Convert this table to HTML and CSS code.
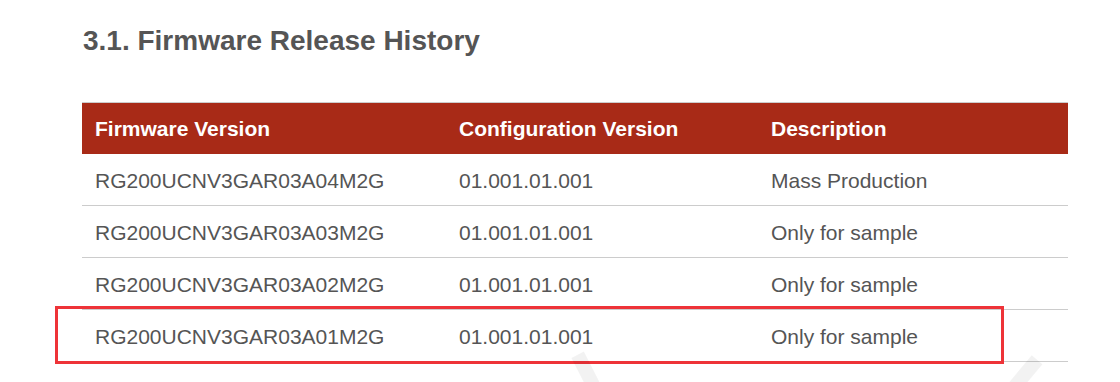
FILE: index.html
```html
<!DOCTYPE html>
<html>
  <head>
    <title>Firmware Release History</title>
    <link rel="stylesheet" href="styles.css">
  </head>
  <body>
    <div class="page">
      <h2 class="section-title">3.1. Firmware Release History</h2>
      <table class="releases">
        <tr>
          <th class="col-fw">Firmware Version</th>
          <th class="col-cfg">Configuration Version</th>
          <th>Description</th>
        </tr>
        <tr>
          <td>RG200UCNV3GAR03A04M2G</td>
          <td>01.001.01.001</td>
          <td>Mass Production</td>
        </tr>
        <tr>
          <td>RG200UCNV3GAR03A03M2G</td>
          <td>01.001.01.001</td>
          <td>Only for sample</td>
        </tr>
        <tr>
          <td>RG200UCNV3GAR03A02M2G</td>
          <td>01.001.01.001</td>
          <td>Only for sample</td>
        </tr>
        <tr>
          <td>RG200UCNV3GAR03A01M2G</td>
          <td>01.001.01.001</td>
          <td>Only for sample</td>
        </tr>
      </table>
      <div class="highlight"></div>
      <span class="mark mark-a"></span>
      <span class="mark mark-b"></span>
    </div>
  </body>
</html>
```

FILE: styles.css
```css
html, body {
  overflow: hidden;
}

body {
  margin: 0;
  height: 382px;
  background: #fff;
  font-family: "Liberation Sans", Arial, sans-serif;
}

.page {
  position: relative;
  width: 986px;
  height: 358px;
  padding-left: 82px;
  padding-top: 24px;
  overflow: hidden;
}

.section-title {
  margin: 0 0 44px 1px;
  font-size: 28px;
  line-height: 34px;
  font-weight: bold;
  color: #555;
}

.releases {
  width: 100%;
  border-collapse: collapse;
  border-top: 1px solid #ccc;
}

.releases th {
  background-color: #a82a17;
  color: #fff;
  text-align: left;
  font-size: 21px;
  font-weight: bold;
  height: 50px;
  padding: 1px 13px 0;
}

.releases td {
  color: #555;
  font-size: 21px;
  height: 49px;
  padding: 2px 13px 0;
  border-bottom: 1px solid #ccc;
}

.col-fw {
  width: 338px;
}

.col-cfg {
  width: 286px;
}

/* red box drawn round the last release */
.highlight {
  position: absolute;
  left: 55px;
  top: 306px;
  box-sizing: border-box;
  width: 949px;
  height: 58px;
  border: 3px solid #ee3338;
}

/* faint watermark strokes along the bottom */
.mark {
  position: absolute;
  display: block;
  width: 14px;
  height: 50px;
  background: rgba(0, 0, 0, 0.05);
}

.mark-a {
  left: 582px;
  top: 352px;
  transform: rotate(-27deg);
}

.mark-b {
  left: 1014px;
  top: 354px;
  transform: rotate(40deg);
}
```
